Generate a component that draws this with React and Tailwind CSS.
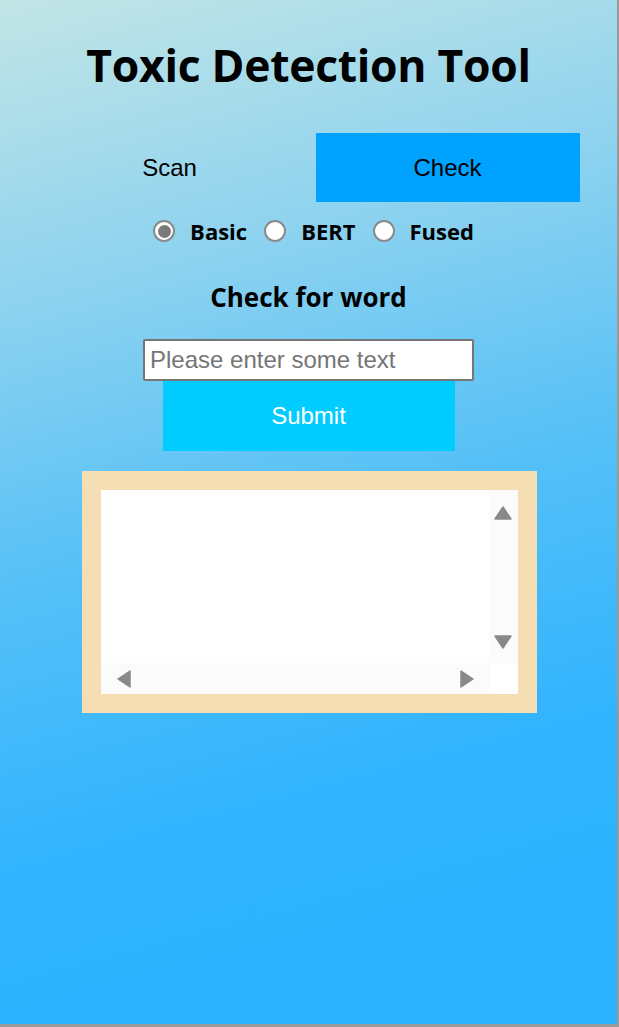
import React from "react";

function Radio({ checked, label }) {
  return (
    <label className="flex items-center">
      <span
        className={
          "w-[22px] h-[22px] rounded-full border-2 border-[#8a8a8a] bg-white flex items-center justify-center"
        }
      >
        {checked && <span className="w-[13px] h-[13px] rounded-full bg-[#7a7a7a]" />}
      </span>
      <span className="ml-[15px] text-[22px] font-bold text-black leading-none">{label}</span>
    </label>
  );
}

export default function App() {
  return (
    <div className="w-[619px] h-[1027px] bg-[#9a9a9a]">
      <div
        className="w-[617px] h-[1024px] bg-[linear-gradient(165deg,#c2e5e6_0%,#8fd3ef_25%,#55c0f7_50%,#2fb3ff_75%,#2ab2ff_100%)] flex flex-col items-center"
        style={{ fontFamily: "'Open Sans', 'Noto Sans', sans-serif" }}
      >
        <h1 className="mt-[37px] text-[44.5px] font-bold leading-[56px] text-black tracking-[-0.3px]">
          Toxic Detection Tool
        </h1>

        <div
          className="mt-[40px] flex w-[542px] gap-[14px]"
          style={{ fontFamily: "'Liberation Sans', Arial, sans-serif" }}
        >
          <div className="w-[264px] h-[69px] flex items-center justify-center text-[24px] text-black">
            Scan
          </div>
          <div className="w-[264px] h-[69px] flex items-center justify-center text-[24px] text-black bg-[#00a2ff]">
            Check
          </div>
        </div>

        <div className="mt-[18px] flex items-center gap-[17px] ml-[10px]">
          <Radio checked label="Basic" />
          <Radio label="BERT" />
          <Radio label="Fused" />
        </div>

        <h2 className="mt-[42px] text-[26px] font-bold text-black leading-none">Check for word</h2>

        <div
          className="mt-[29px] flex flex-col items-center"
          style={{ fontFamily: "'Liberation Sans', Arial, sans-serif" }}
        >
          <input
            className="w-[331px] h-[42px] bg-white border-2 border-[#767676] rounded-[2px] px-[5px] text-[24px] text-black placeholder:text-[#757575] outline-none"
            placeholder="Please enter some text"
          />
          <button className="w-[292px] h-[70px] bg-[#00ccff] text-white text-[24px]">Submit</button>
        </div>

        <div className="mt-[20px] ml-[1px] w-[455px] h-[242px] bg-[#f5deb3] p-[19px]">
          <div className="w-full h-full bg-white grid grid-cols-[1fr_29px] grid-rows-[1fr_31px]">
            <div className="bg-white" />
            <div className="bg-[#fbfbfb] flex flex-col items-center justify-between pt-[16px] pb-[14px]">
              <svg width="18" height="14" viewBox="0 0 18 14">
                <path d="M9 1 L17 13 L1 13 Z" fill="#898989" stroke="#898989" strokeLinejoin="round" strokeWidth="1.5" />
              </svg>
              <svg width="18" height="14" viewBox="0 0 18 14">
                <path d="M1 1 L17 1 L9 13 Z" fill="#898989" stroke="#898989" strokeLinejoin="round" strokeWidth="1.5" />
              </svg>
            </div>
            <div className="bg-[#fbfbfb] flex items-center justify-between pl-[16px] pr-[15px]">
              <svg width="14" height="18" viewBox="0 0 14 18">
                <path d="M13 1 L13 17 L1 9 Z" fill="#898989" stroke="#898989" strokeLinejoin="round" strokeWidth="1.5" />
              </svg>
              <svg width="14" height="18" viewBox="0 0 14 18">
                <path d="M1 1 L1 17 L13 9 Z" fill="#898989" stroke="#898989" strokeLinejoin="round" strokeWidth="1.5" />
              </svg>
            </div>
            <div className="bg-white" />
          </div>
        </div>
      </div>
    </div>
  );
}
